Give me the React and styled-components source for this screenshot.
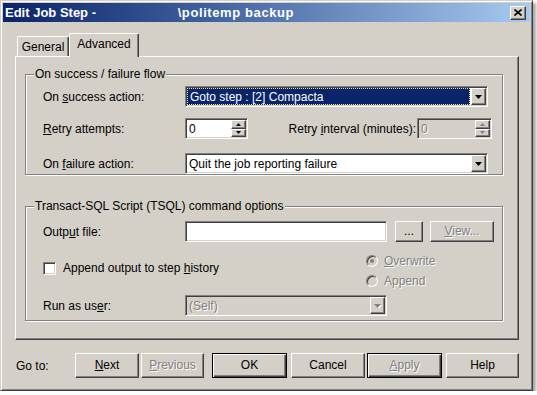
import React from "react";
import styled, { createGlobalStyle, css } from "styled-components";

const GlobalStyle = createGlobalStyle`
  html, body { margin: 0; padding: 0; background: #fff; }
  body {
    font-family: "Liberation Sans", Arial, sans-serif;
    font-size: 12px;
    color: #000;
  }
  * { box-sizing: border-box; }
`;

const raised = css`
  border: 1px solid;
  border-color: #fff #404040 #404040 #fff;
  box-shadow: inset -1px -1px 0 #808080;
  background: #d4d0c8;
`;

const sunken = css`
  border: 1px solid;
  border-color: #808080 #fff #fff #808080;
  box-shadow: inset 1px 1px 0 #404040, inset -1px -1px 0 #d4d0c8;
`;

const disabledText = css`
  color: #808080;
  text-shadow: 1px 1px 0 #fff;
`;

const Window = styled.div`
  width: 533px;
  height: 391px;
  background: #d4d0c8;
  border: 1px solid;
  border-color: #d4d0c8 #404040 #404040 #d4d0c8;
  box-shadow: inset 1px 1px 0 #fff, inset -1px -1px 0 #808080,
    3px 3px 3px rgba(0, 0, 0, 0.35);
  padding: 2px;
  display: flex;
  flex-direction: column;
`;

const TitleBar = styled.div`
  height: 19px;
  display: flex;
  align-items: center;
  padding: 0 4px 0 2px;
  background: linear-gradient(to right, #0a246a 0%, #3a5a98 35%, #a6caf0 100%);
`;

const TitleText = styled.span`
  color: #fff;
  font-weight: bold;
  font-size: 13px;
  white-space: nowrap;
`;

const TitleTail = styled.span`
  letter-spacing: 0.6px;
`;

const Redacted = styled.span`
  display: inline-block;
  width: 78px;
`;

const CloseButton = styled.div`
  ${raised};
  margin-left: auto;
  width: 16px;
  height: 14px;
  display: flex;
  align-items: center;
  justify-content: center;
`;

const Body = styled.div`
  display: flex;
  flex-direction: column;
  padding: 11px 11px 0 12px;
`;

const TabStrip = styled.div`
  display: flex;
  align-items: flex-end;
  height: 23px;
  padding-left: 2px;
  position: relative;
  z-index: 1;
`;

const Tab = styled.div`
  height: ${p => (p.$active ? 24 : 20)}px;
  width: ${p => p.$w}px;
  margin-bottom: ${p => (p.$active ? -1 : 0)}px;
  background: #d4d0c8;
  border-top: 1px solid #fff;
  border-left: 1px solid #fff;
  border-right: 1px solid #404040;
  border-radius: 2px 2px 0 0;
  box-shadow: inset -1px 0 0 #808080;
  display: flex;
  justify-content: center;
  padding-top: 3px;
`;

const Panel = styled.div`
  height: 284px;
  border: 1px solid;
  border-color: #fff #404040 #404040 #fff;
  box-shadow: inset -1px -1px 0 #808080;
  padding: 10px 15px 0 9px;
  display: flex;
  flex-direction: column;
`;

const Group = styled.fieldset`
  margin: ${p => p.$mt || 0}px 0 0 0;
  min-width: 0;
  padding: 0 8px ${p => p.$pb || 0}px 8px;
  border: 1px solid #808080;
  box-shadow: 1px 1px 0 #fff, inset 1px 1px 0 #fff;
`;

const Legend = styled.legend`
  padding: 0 1px;
  line-height: 14px;
  background: #d4d0c8;
`;

const GroupBody = styled.div`
  padding: ${p => p.$top}px 0 0 9px;
  display: flex;
  flex-direction: column;
`;

const Row = styled.div`
  display: flex;
  align-items: center;
  height: 21px;
  margin-top: ${p => p.$mt || 0}px;
`;

const Label = styled.span`
  width: ${p => p.$w || 142}px;
  flex: none;
  white-space: nowrap;
  ${p => p.$disabled && disabledText};
`;

const FlexLabel = styled.span`
  flex: 1;
  text-align: right;
  padding-right: 1px;
  white-space: nowrap;
`;

const U = styled.span`
  text-decoration: underline;
`;

const Field = styled.div`
  ${sunken};
  width: ${p => p.$w}px;
  height: 21px;
  flex: none;
  padding: 1px;
  display: flex;
  align-items: stretch;
  background: ${p => (p.$disabled ? "#d4d0c8" : "#fff")};
  margin-right: ${p => p.$mr || 0}px;
`;

const Value = styled.div`
  flex: 1;
  display: flex;
  align-items: center;
  padding-left: 2px;
  white-space: nowrap;
  overflow: hidden;
  ${p => p.$disabled && disabledText};
`;

const Selection = styled.div`
  flex: 1;
  display: flex;
  align-items: center;
  padding-left: 2px;
  margin-right: 1px;
  background: #0a246a;
  color: #fff;
  border: 1px dotted #e8e4a0;
  white-space: nowrap;
`;

const DropButton = styled.div`
  ${raised};
  width: 15px;
  flex: none;
  display: flex;
  align-items: center;
  justify-content: center;
`;

const SpinColumn = styled.div`
  width: 15px;
  flex: none;
  display: flex;
  flex-direction: column;
`;

const SpinHalf = styled.div`
  ${raised};
  flex: 1;
  display: flex;
  align-items: center;
  justify-content: center;
`;

const Button = styled.div`
  ${raised};
  width: ${p => p.$w}px;
  height: ${p => p.$h || 25}px;
  margin-left: ${p => p.$ml || 0}px;
  flex: none;
  display: flex;
  align-items: center;
  justify-content: center;
  padding-bottom: 1px;
  ${p => p.$disabled && disabledText};
  ${p =>
    p.$default &&
    css`
      border-color: #000;
      box-shadow: inset 1px 1px 0 #fff, inset -1px -1px 0 #404040,
        inset -2px -2px 0 #808080;
    `};
`;

const OptionArea = styled.div`
  display: grid;
  grid-template-columns: 323px auto;
  height: 36px;
  margin-top: 11px;
`;

const CheckRow = styled.label`
  display: flex;
  align-items: center;
  gap: 7px;
  margin-top: 8px;
  height: 14px;
`;

const CheckBox = styled.span`
  ${sunken};
  width: 13px;
  height: 13px;
  background: #fff;
`;

const RadioList = styled.div`
  display: flex;
  flex-direction: column;
  gap: 4px;
`;

const RadioRow = styled.div`
  display: flex;
  align-items: center;
  gap: 6px;
  height: 16px;
  ${disabledText};
`;

const Radio = styled.span`
  width: 12px;
  height: 12px;
  border-radius: 50%;
  border: 1px solid;
  border-color: #808080 #fff #fff #808080;
  box-shadow: inset 1px 1px 0 #404040, inset -1px -1px 0 #d4d0c8;
  background: #d4d0c8;
  display: flex;
  align-items: center;
  justify-content: center;
  &::after {
    content: "";
    width: 4px;
    height: 4px;
    border-radius: 50%;
    background: ${p => (p.$checked ? "#808080" : "transparent")};
  }
`;

const Footer = styled.div`
  display: flex;
  align-items: center;
  margin-top: 13px;
  padding-left: 1px;
`;

const FooterLabel = styled.span`
  width: 60px;
`;

const Arrow = ({ disabled }) => (
  <svg width="7" height="4" viewBox="0 0 7 4">
    {disabled && <path d="M1 1h7l-3.5 4z" fill="#fff" />}
    <path d="M0 0h7l-3.5 4z" fill={disabled ? "#808080" : "#000"} />
  </svg>
);

const SpinArrow = ({ up, disabled }) => (
  <svg width="5" height="3" viewBox="0 0 5 3">
    <path
      d={up ? "M2.5 0L5 3H0z" : "M0 0h5L2.5 3z"}
      fill={disabled ? "#808080" : "#000"}
    />
  </svg>
);

const Combo = ({ w, value, selected, disabled }) => (
  <Field $w={w} $disabled={disabled}>
    {selected ? (
      <Selection>{value}</Selection>
    ) : (
      <Value $disabled={disabled}>{value}</Value>
    )}
    <DropButton>
      <Arrow disabled={disabled} />
    </DropButton>
  </Field>
);

const Spinner = ({ w, value, disabled, mr }) => (
  <Field $w={w} $disabled={disabled} $mr={mr}>
    <Value $disabled={disabled}>{value}</Value>
    <SpinColumn>
      <SpinHalf>
        <SpinArrow up disabled={disabled} />
      </SpinHalf>
      <SpinHalf>
        <SpinArrow disabled={disabled} />
      </SpinHalf>
    </SpinColumn>
  </Field>
);

export default function App() {
  return (
    <>
      <GlobalStyle />
      <Window>
        <TitleBar>
          <TitleText>
            Edit Job Step - <Redacted />
            <TitleTail>\politemp backup</TitleTail>
          </TitleText>
          <CloseButton>
            <svg width="8" height="7" viewBox="0 0 8 7">
              <path d="M0.5 0.5l7 6M7.5 0.5l-7 6" stroke="#000" strokeWidth="1.6" />
            </svg>
          </CloseButton>
        </TitleBar>
        <Body>
          <TabStrip>
            <Tab $w={52}>General</Tab>
            <Tab $w={70} $active>
              Advanced
            </Tab>
          </TabStrip>
          <Panel>
            <Group>
              <Legend>On success / failure flow</Legend>
              <GroupBody $top={5}>
                <Row>
                  <Label>
                    On <U>s</U>uccess action:
                  </Label>
                  <Combo w={303} value="Goto step : [2] Compacta" selected />
                </Row>
                <Row $mt={11}>
                  <Label>
                    <U>R</U>etry attempts:
                  </Label>
                  <Spinner w={63} value="0" />
                  <FlexLabel>
                    Retry <U>i</U>nterval (minutes):
                  </FlexLabel>
                  <Spinner w={75} value="0" disabled mr={2} />
                </Row>
                <Row $mt={14}>
                  <Label>
                    On <U>f</U>ailure action:
                  </Label>
                  <Combo w={303} value="Quit the job reporting failure" />
                </Row>
              </GroupBody>
            </Group>
            <Group $mt={24} $pb={4}>
              <Legend>Transact-SQL Script (TSQL) command options</Legend>
              <GroupBody $top={8}>
                <Row>
                  <Label>
                    Outp<U>u</U>t file:
                  </Label>
                  <Field $w={202}>
                    <Value />
                  </Field>
                  <Button $w={28} $h={21} $ml={8}>
                    ...
                  </Button>
                  <Button $w={64} $h={21} $ml={7} $disabled>
                    <span>
                      <U>V</U>iew...
                    </span>
                  </Button>
                </Row>
                <OptionArea>
                  <CheckRow>
                    <CheckBox />
                    <span>
                      Append output to step <U>h</U>istory
                    </span>
                  </CheckRow>
                  <RadioList>
                    <RadioRow>
                      <Radio $checked />
                      <span>
                        <U>O</U>verwrite
                      </span>
                    </RadioRow>
                    <RadioRow>
                      <Radio />
                      <span>Append</span>
                    </RadioRow>
                  </RadioList>
                </OptionArea>
                <Row $mt={6}>
                  <Label>
                    Run as us<U>e</U>r:
                  </Label>
                  <Combo w={202} value="(Self)" disabled />
                </Row>
              </GroupBody>
            </Group>
          </Panel>
          <Footer>
            <FooterLabel>Go to:</FooterLabel>
            <Button $w={64}>
              <span>
                <U>N</U>ext
              </span>
            </Button>
            <Button $w={63} $ml={2} $disabled>
              <span>
                <U>P</U>revious
              </span>
            </Button>
            <Button $w={75} $ml={8} $default>
              OK
            </Button>
            <Button $w={74} $ml={4}>
              Cancel
            </Button>
            <Button $w={75} $ml={2} $disabled $default>
              <span>
                <U>A</U>pply
              </span>
            </Button>
            <Button $w={73} $ml={4}>
              Help
            </Button>
          </Footer>
        </Body>
      </Window>
    </>
  );
}
